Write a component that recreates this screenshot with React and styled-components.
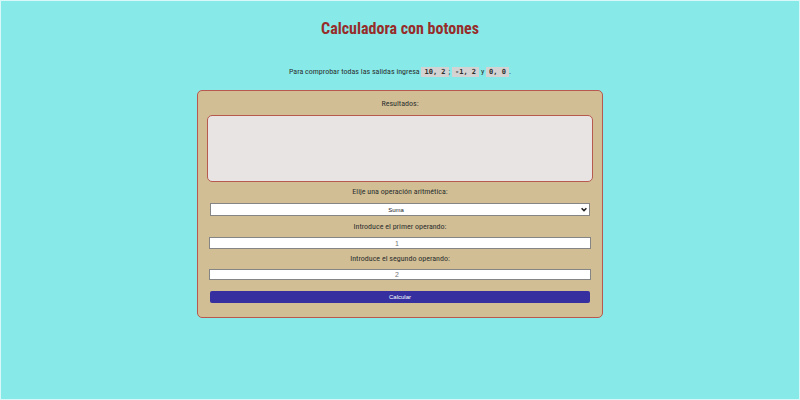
import React, { useState } from 'react';
import styled, { createGlobalStyle } from 'styled-components';

const GlobalStyle = createGlobalStyle`
  *, *::before, *::after { box-sizing: border-box; }
  body {
    margin: 0;
    background: #87eae9;
    color: #2b3030;
    font-family: "Roboto Condensed", "Liberation Sans Narrow", Roboto, sans-serif;
    font-size: 8px;
    line-height: 10px;
  }
`;

const Page = styled.main`
  display: flex;
  flex-direction: column;
  align-items: center;
  min-height: 100vh;
  padding: 18px 8px;
  border: 1px solid #d9f8f8;
`;

const Title = styled.h1`
  margin: 0 0 28px;
  color: #962d2b;
  font-size: 16px;
  line-height: 20px;
`;

const Hint = styled.p`
  margin: 0 0 13px;
`;

const Sample = styled.code`
  padding: 1px 3px;
  background: #d3d3d3;
  font-family: "DejaVu Sans Mono", monospace;
  font-size: 7px;
  line-height: 8px;
  font-weight: 700;
`;

const Panel = styled.form`
  display: flex;
  flex-direction: column;
  width: 100%;
  max-width: 406px;
  padding: 8px 9px 14px;
  background: #d2be94;
  border: 1px solid #b7594f;
  border-radius: 5px;
`;

const Results = styled.output`
  min-height: 67px;
  margin: 6px 0 5px;
  padding: 4px;
  background: #e8e4e3;
  border: 1px solid #b7594f;
  border-radius: 5px;
  text-align: center;
`;

const Label = styled.label`
  text-align: center;
`;

const Field = styled.input`
  height: ${({ $height }) => $height}px;
  margin: ${({ $gap }) => `5px 2px ${$gap}px`};
  padding: 0;
  background: #fff;
  border: 1px solid #858585;
  font: 7px/8px "Liberation Sans", sans-serif;
  text-align: center;
  text-indent: -6px;
  &::placeholder { color: #757575; opacity: 1; }
`;

const SelectWrap = styled.div`
  position: relative;
  display: flex;
  margin: 6px 3px;
`;

const Select = styled.select`
  appearance: none;
  width: 100%;
  height: 13px;
  padding: 0 14px 0 6px;
  background: #fff;
  border: 1px solid #858585;
  border-radius: 0;
  color: #222;
  font: 6px/8px "Liberation Sans", sans-serif;
  text-align: center;
  text-align-last: center;
`;

const Chevron = styled.svg`
  position: absolute;
  right: 3px;
  top: 4px;
  width: 6px;
  height: 5px;
  pointer-events: none;
`;

const Submit = styled.button`
  height: 12px;
  margin: 0 3px;
  padding: 0;
  background: #352f9f;
  border: 0;
  border-radius: 2px;
  color: #fff;
  font: 6px/12px "Liberation Sans", sans-serif;
`;

const operations = {
  Suma: (a, b) => a + b,
  Resta: (a, b) => a - b,
  Multiplicación: (a, b) => a * b,
  División: (a, b) => a / b,
};

export default function App() {
  const [operation, setOperation] = useState('Suma');
  const [first, setFirst] = useState('');
  const [second, setSecond] = useState('');
  const [result, setResult] = useState('');

  const calculate = (event) => {
    event.preventDefault();
    setResult(String(operations[operation](Number(first), Number(second))));
  };

  return (
    <>
      <GlobalStyle />
      <Page>
        <Title>Calculadora con botones</Title>
        <Hint>
          Para comprobar todas las salidas ingresa <Sample>10, 2</Sample>; <Sample>-1, 2</Sample> y <Sample>0, 0</Sample>.
        </Hint>
        <Panel onSubmit={calculate}>
          <Label htmlFor="results">Resultados:</Label>
          <Results id="results">{result}</Results>
          <Label htmlFor="operation">Elije una operación aritmética:</Label>
          <SelectWrap>
            <Select id="operation" value={operation} onChange={(e) => setOperation(e.target.value)}>
              {Object.keys(operations).map((name) => <option key={name}>{name}</option>)}
            </Select>
            <Chevron viewBox="0 0 7 5" aria-hidden="true">
              <path d="M0.7 1L3.5 3.8L6.3 1" fill="none" stroke="#222" strokeWidth="1.8" />
            </Chevron>
          </SelectWrap>
          <Label htmlFor="first">Introduce el primer operando:</Label>
          <Field id="first" $height={12} $gap={5} placeholder="1" value={first} onChange={(e) => setFirst(e.target.value)} />
          <Label htmlFor="second">Introduce el segundo operando:</Label>
          <Field id="second" $height={11} $gap={11} placeholder="2" value={second} onChange={(e) => setSecond(e.target.value)} />
          <Submit type="submit">Calcular</Submit>
        </Panel>
      </Page>
    </>
  );
}
